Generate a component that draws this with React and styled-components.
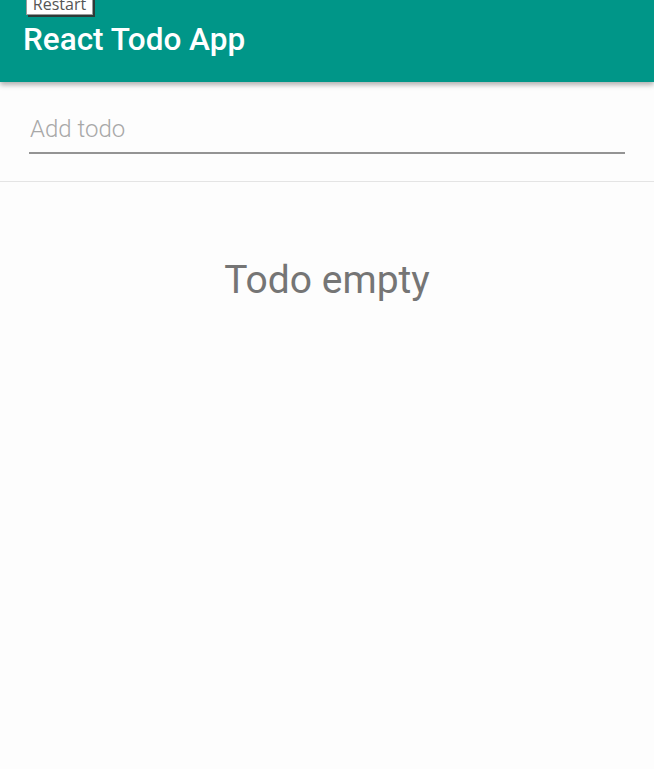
import React from 'react';
import styled, { createGlobalStyle } from 'styled-components';

const GlobalStyle = createGlobalStyle`
    html, body {
        margin: 0;
        padding: 0;
        background: #fdfdfd;
        font-family: Roboto, "Liberation Sans", sans-serif;
    }
`;

const Header = styled.header`
    height: 82px;
    background: #009688;
    box-shadow: 0 3px 5px rgba(0, 0, 0, 0.3);
    position: relative;
    padding: 0 23px;
    box-sizing: border-box;
    display: flex;
    align-items: flex-end;
`;

const RestartButton = styled.button`
    position: absolute;
    top: -8px;
    left: 26px;
    width: 67px;
    height: 23px;
    padding: 0;
    background: #fff;
    border: 1px solid #9a9a9a;
    box-shadow: 2px 2px 0 #2f3a38;
    font-family: "Open Sans", sans-serif;
    font-size: 16px;
    color: #555;
    line-height: 20px;
    cursor: pointer;
`;

const Title = styled.h1`
    margin: 0 0 24px;
    color: #fff;
    font-size: 31.5px;
    font-weight: 500;
    line-height: 36px;
`;

const Form = styled.div`
    padding: 25px 29px 27px;
    border-bottom: 1px solid #e4e4e4;
`;

const TodoInput = styled.input`
    display: block;
    width: 100%;
    box-sizing: border-box;
    border: none;
    border-bottom: 2px solid #949494;
    background: transparent;
    outline: none;
    padding: 8px 0 9px 1px;
    font-family: Roboto, sans-serif;
    font-size: 24px;
    font-weight: 300;
    color: #333;
    &::placeholder {
        color: #a8a8a8;
    }
`;

const Empty = styled.p`
    margin: 75px 0 0;
    text-align: center;
    font-size: 39px;
    font-weight: 400;
    color: #757575;
`;

const App = () => {
    return (
        <>
            <GlobalStyle />
            <Header>
                <RestartButton>Restart</RestartButton>
                <Title>React Todo App</Title>
            </Header>
            <Form>
                <TodoInput placeholder="Add todo" />
            </Form>
            <Empty>Todo empty</Empty>
        </>
    );
};

export default App;
